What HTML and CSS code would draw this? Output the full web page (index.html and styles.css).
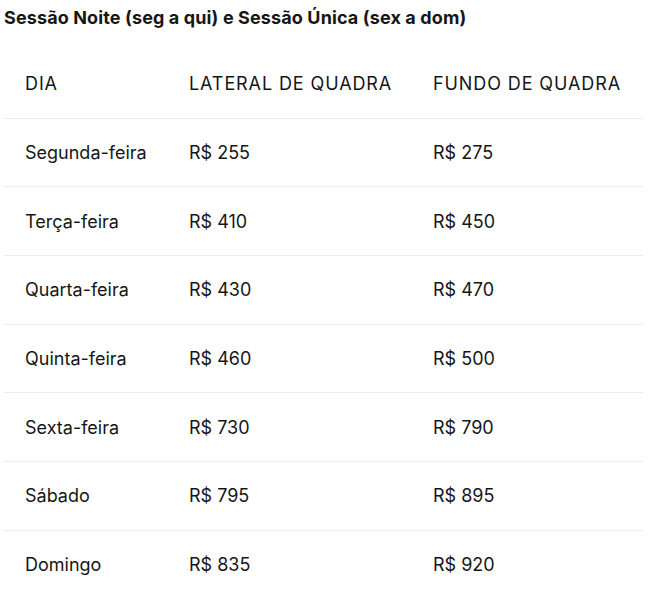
FILE: index.html
```html
<!DOCTYPE html>
<html lang="pt-BR">
<head>
<meta charset="utf-8">
<link rel="stylesheet" href="styles.css">
</head>
<body>
<h3 class="title">Sessão Noite (seg a qui) e Sessão Única (sex a dom)</h3>
<table class="prices">
  <thead>
    <tr><th class="c1">DIA</th><th class="c2">LATERAL DE QUADRA</th><th class="c3">FUNDO DE QUADRA</th></tr>
  </thead>
  <tbody>
    <tr><td>Segunda-feira</td><td>R$ 255</td><td>R$ 275</td></tr>
    <tr><td>Terça-feira</td><td>R$ 410</td><td>R$ 450</td></tr>
    <tr><td>Quarta-feira</td><td>R$ 430</td><td>R$ 470</td></tr>
    <tr><td>Quinta-feira</td><td>R$ 460</td><td>R$ 500</td></tr>
    <tr><td>Sexta-feira</td><td>R$ 730</td><td>R$ 790</td></tr>
    <tr><td>Sábado</td><td>R$ 795</td><td>R$ 895</td></tr>
    <tr><td>Domingo</td><td>R$ 835</td><td>R$ 920</td></tr>
  </tbody>
</table>
</body>
</html>
```
FILE: styles.css
```css
html, body { margin: 0; padding: 0; background: #fff; }
body {
  font-family: "Inter", "Liberation Sans", sans-serif;
  color: #161616;
  padding: 6px 6px 0 4px;
}
.title {
  margin: 0;
  font-size: 18px;
  font-weight: 700;
  line-height: 24px;
  letter-spacing: 0.12px;
}
.prices {
  margin-top: 20px;
  width: 639px;
  border-collapse: collapse;
  table-layout: fixed;
  font-size: 18px;
}
.prices th, .prices td {
  text-align: left;
  font-weight: 400;
  padding: 0 0 0 21px;
  height: 67.67px;
  vertical-align: middle;
  white-space: nowrap;
}
.prices th { letter-spacing: 0.9px; }
.prices tbody tr { border-top: 1.5px solid #ececec; }
.c1 { width: 143px; }
.c2 { width: 223px; }
.c3 { width: auto; }
```
